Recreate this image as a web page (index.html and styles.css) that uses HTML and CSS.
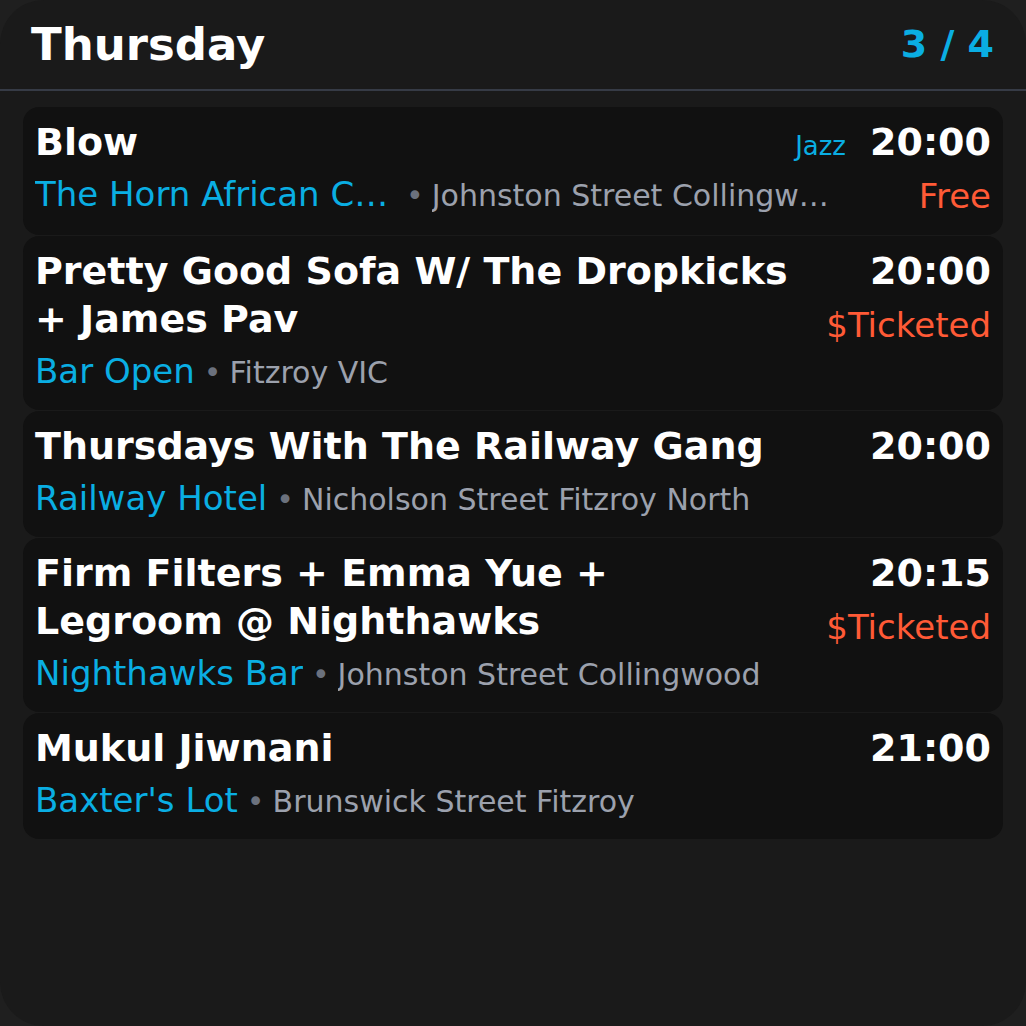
FILE: index.html
```html
<!DOCTYPE html>
<html lang="en">
<head>
<meta charset="utf-8">
<title>Thursday</title>
<link rel="stylesheet" href="styles.css">
</head>
<body>
<div class="app">
  <header class="header">
    <h1 class="day">Thursday</h1>
    <div class="counter">3 / 4</div>
  </header>
  <main class="list">
    <article class="card">
      <div class="main">
        <div class="title-row">
          <div class="title">Blow</div>
          <div class="tag">Jazz</div>
        </div>
        <div class="place">
          <span class="venue venue-short">The Horn African Community Hall</span>
          <span class="sep">•</span>
          <span class="addr">Johnston Street Collingwood</span>
        </div>
      </div>
      <div class="side">
        <div class="time">20:00</div>
        <div class="price">Free</div>
      </div>
    </article>
    <article class="card">
      <div class="main">
        <div class="title-row">
          <div class="title">Pretty Good Sofa W/ The Dropkicks + James Pav</div>
        </div>
        <div class="place">
          <span class="venue">Bar Open</span>
          <span class="sep">•</span>
          <span class="addr">Fitzroy VIC</span>
        </div>
      </div>
      <div class="side">
        <div class="time">20:00</div>
        <div class="price">$Ticketed</div>
      </div>
    </article>
    <article class="card">
      <div class="main">
        <div class="title-row">
          <div class="title">Thursdays With The Railway Gang</div>
        </div>
        <div class="place">
          <span class="venue">Railway Hotel</span>
          <span class="sep">•</span>
          <span class="addr">Nicholson Street Fitzroy North</span>
        </div>
      </div>
      <div class="side">
        <div class="time">20:00</div>
      </div>
    </article>
    <article class="card">
      <div class="main">
        <div class="title-row">
          <div class="title">Firm Filters + Emma Yue + Legroom @ Nighthawks</div>
        </div>
        <div class="place">
          <span class="venue">Nighthawks Bar</span>
          <span class="sep">•</span>
          <span class="addr">Johnston Street Collingwood</span>
        </div>
      </div>
      <div class="side">
        <div class="time">20:15</div>
        <div class="price">$Ticketed</div>
      </div>
    </article>
    <article class="card">
      <div class="main">
        <div class="title-row">
          <div class="title">Mukul Jiwnani</div>
        </div>
        <div class="place">
          <span class="venue">Baxter's Lot</span>
          <span class="sep">•</span>
          <span class="addr">Brunswick Street Fitzroy</span>
        </div>
      </div>
      <div class="side">
        <div class="time">21:00</div>
      </div>
    </article>
  </main>
</div>
</body>
</html>
```
FILE: styles.css
```css
* { box-sizing: border-box; }
html, body {
  margin: 0;
  padding: 0;
  background: #1f1f1f;
}
body {
  font-family: "DejaVu Sans", "Noto Sans", sans-serif;
  color: #ffffff;
}
.app {
  min-height: 1026px;
  background: #1a1a1a;
  border-radius: 44px;
  overflow: hidden;
}
.header {
  height: 91px;
  display: flex;
  align-items: center;
  justify-content: space-between;
  padding: 0 32px 0 31px;
  border-bottom: 2px solid #363b46;
}
.day {
  margin: 0;
  font-size: 45px;
  font-weight: 700;
  line-height: 1;
}
.counter {
  font-size: 38px;
  font-weight: 700;
  color: #0aaee3;
  line-height: 1;
  margin-bottom: 2px;
}
.list {
  display: flex;
  flex-direction: column;
  gap: 1px;
  padding: 16px 23px 0;
}
.card {
  display: flex;
  gap: 24px;
  background: #111111;
  border-radius: 16px;
  padding: 11px 12px 15px;
}
.main {
  flex: 1;
  min-width: 0;
  display: flex;
  flex-direction: column;
}
.title-row {
  display: flex;
  align-items: baseline;
  justify-content: space-between;
  gap: 24px;
}
.title {
  font-size: 38px;
  font-weight: 700;
  line-height: 48px;
}
.tag {
  font-size: 26px;
  line-height: 30px;
  color: #0aaee3;
  white-space: nowrap;
}
.place {
  display: flex;
  align-items: baseline;
  flex: none;
  height: 48px;
  margin-top: 4px;
  line-height: 48px;
  white-space: nowrap;
  min-width: 0;
}
.venue {
  font-size: 34px;
  color: #0aaee3;
  overflow: hidden;
  text-overflow: ellipsis;
  flex: none;
}
.venue-short {
  max-width: 362px;
}
.sep {
  font-size: 30px;
  color: #6b717d;
  margin: 0 8px 0 9px;
  flex: none;
}
.addr {
  font-size: 30px;
  color: #9ca1ad;
  overflow: hidden;
  text-overflow: ellipsis;
  min-width: 0;
}
.side {
  flex: none;
  display: flex;
  flex-direction: column;
  align-items: flex-end;
}
.time {
  font-size: 38px;
  font-weight: 700;
  line-height: 48px;
}
.price {
  font-size: 34px;
  line-height: 48px;
  margin-top: 6px;
  color: #ff5a36;
}
```
